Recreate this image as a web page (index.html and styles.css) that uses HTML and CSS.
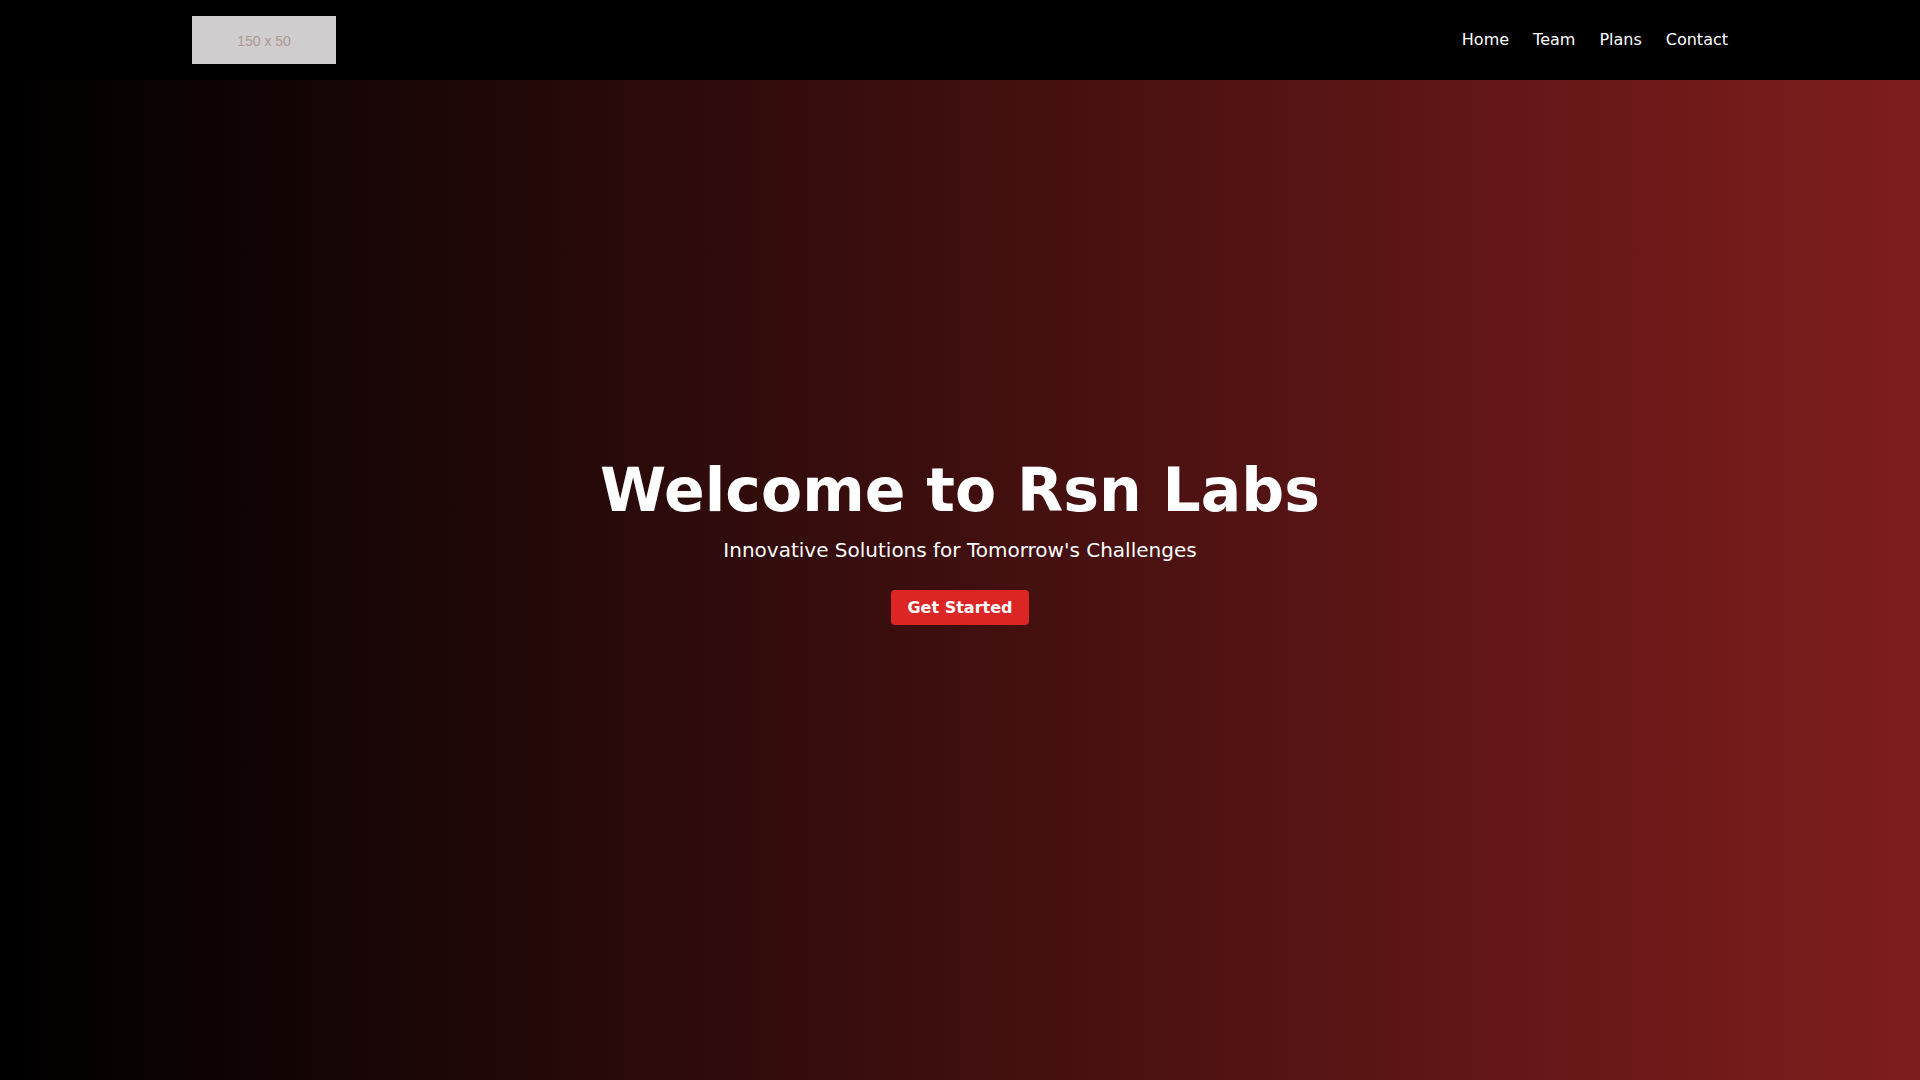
FILE: index.html
```html
<!DOCTYPE html>
<html lang="en">
<head>
  <meta charset="UTF-8">
  <meta name="viewport" content="width=device-width, initial-scale=1.0">
  <title>Rsn Labs</title>
  <link rel="stylesheet" href="styles.css">
</head>
<body>
  <header class="header">
    <div class="container">
      <div class="logo">150 x 50</div>
      <nav class="nav">
        <a href="#home">Home</a>
        <a href="#team">Team</a>
        <a href="#plans">Plans</a>
        <a href="#contact">Contact</a>
      </nav>
    </div>
  </header>

  <section id="home" class="hero">
    <div class="hero-content">
      <h1>Welcome to Rsn Labs</h1>
      <p>Innovative Solutions for Tomorrow's Challenges</p>
      <a href="#plans" class="btn">Get Started</a>
    </div>
  </section>
</body>
</html>
```

FILE: styles.css
```css
* {
  box-sizing: border-box;
  margin: 0;
  padding: 0;
}
body {
  font-family: "DejaVu Sans", sans-serif;
  line-height: 1.5;
  color: #fff;
  background: #000;
}
a {
  color: inherit;
  text-decoration: none;
}
.header {
  position: fixed;
  top: 0;
  left: 0;
  width: 100%;
  background: #000;
  padding: 16px 0;
}
.container {
  width: 1536px;
  margin: 0 auto;
  display: flex;
  justify-content: space-between;
  align-items: center;
}
.logo {
  width: 144px;
  height: 48px;
  display: flex;
  align-items: center;
  justify-content: center;
  padding-top: 2px;
  background: #cfcdcd;
  color: #ae9794;
  font-family: "Liberation Sans", Arial, sans-serif;
  font-size: 14px;
}
.nav {
  display: flex;
  gap: 24px;
}
.hero {
  height: 100vh;
  display: flex;
  align-items: center;
  justify-content: center;
  text-align: center;
  background: linear-gradient(to right, #000, #7f1d1d);
}
.hero h1 {
  font-size: 60px;
  line-height: 1;
  margin-bottom: 16px;
}
.hero p {
  font-size: 20px;
  line-height: 28px;
  margin-bottom: 32px;
}
.btn {
  background: #dc2626;
  padding: 8px 16px;
  border-radius: 4px;
  font-weight: bold;
}
```
